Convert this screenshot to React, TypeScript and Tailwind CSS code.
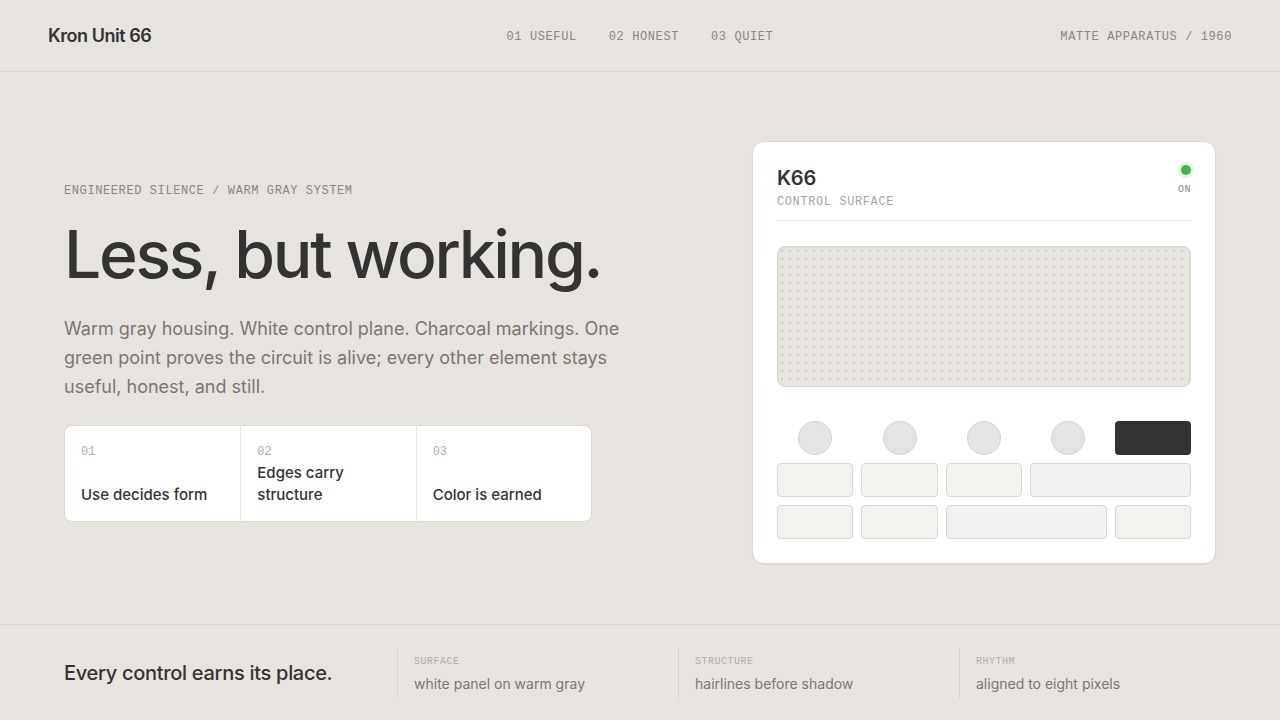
const mono = 'font-["Liberation_Mono","DejaVu_Sans_Mono",monospace]'
const sans = 'font-["Inter","Noto_Sans",sans-serif]'

const principles = [
  { n: '01', t: 'Use decides form' },
  { n: '02', t: 'Edges carry structure' },
  { n: '03', t: 'Color is earned' },
]

const notes = [
  { k: 'SURFACE', v: 'white panel on warm gray' },
  { k: 'STRUCTURE', v: 'hairlines before shadow' },
  { k: 'RHYTHM', v: 'aligned to eight pixels' },
]

function Knob() {
  return (
    <div className="flex items-center justify-center">
      <div className="w-[34px] h-[34px] rounded-full bg-[#e4e4e4] border border-[#d6d3ce]" />
    </div>
  )
}

function Key({ wide = false }: { wide?: boolean }) {
  return (
    <div
      className={
        wide
          ? 'col-span-2 h-[34px] rounded-[4px] border border-[#dad7d2] bg-[#f1f1f1]'
          : 'h-[34px] rounded-[4px] border border-[#dad7d2] bg-[#f3f2ee]'
      }
    />
  )
}

function ControlPanel() {
  return (
    <div className="w-[464px] shrink-0 rounded-[12px] bg-white border border-[#dcd9d4] shadow-[0_1px_2px_rgba(0,0,0,0.04)] p-6">
      <div className="flex items-start justify-between border-b border-[#e6e4e0] pb-[10px]">
        <div>
          <div className={`${sans} text-[20px] font-semibold leading-6 text-[#333] tracking-[-0.01em]`}>K66</div>
          <div className={`${mono} text-[12px] leading-4 tracking-[0.05em] text-[#aaa6a0] mt-1`}>CONTROL SURFACE</div>
        </div>
        <div className="flex flex-col items-end -mt-px">
          <div className="w-[10px] h-[10px] rounded-full bg-[#4caf50] shadow-[0_0_0_3px_#e3f3e3]" />
          <div className={`${mono} text-[10px] tracking-[0.05em] text-[#8a8680] mt-[9px] leading-[12px]`}>ON</div>
        </div>
      </div>

      <div className="mt-[25px] h-[141px] rounded-[8px] border border-[#d8d4ce] bg-[#e7e4df] bg-[radial-gradient(#cdc8c1_1px,transparent_1px)] bg-[length:8px_8px] shadow-[inset_0_1px_2px_rgba(0,0,0,0.05)]" />

      <div className="mt-[34px] grid grid-cols-5 gap-2">
        <Knob />
        <Knob />
        <Knob />
        <Knob />
        <div className="h-[34px] rounded-[4px] bg-[#333333]" />
        <Key />
        <Key />
        <Key />
        <Key wide />
        <Key />
        <Key />
        <Key wide />
        <Key />
      </div>
    </div>
  )
}

export default function App() {
  return (
    <div className={`${sans} min-h-[720px] bg-[#e7e4df] text-[#333] flex flex-col`}>
      <header className="h-[72px] border-b border-[#d6d3ce] px-12 grid grid-cols-3 items-center">
        <div className="text-[18px] font-semibold tracking-[-0.025em] text-[#333]">Kron Unit 66</div>
        <nav className={`${mono} flex justify-center gap-8 pt-[2px] text-[12px] tracking-[0.05em] text-[#8a8680]`}>
          <span>01 USEFUL</span>
          <span>02 HONEST</span>
          <span>03 QUIET</span>
        </nav>
        <div className={`${mono} text-right pt-[2px] text-[12px] tracking-[0.05em] text-[#8a8680]`}>MATTE APPARATUS / 1960</div>
      </header>

      <main className="flex-1 px-16 flex items-center justify-between pt-[8px]">
        <section className="w-[580px]">
          <div className={`${mono} text-[12px] tracking-[0.05em] text-[#8a8680]`}>ENGINEERED SILENCE / WARM GRAY SYSTEM</div>
          <h1 className="mt-[14px] text-[66px] leading-[80px] font-medium tracking-[-0.035em] text-[#333]">
            Less, but working.
          </h1>
          <p className="mt-[20px] text-[18px] leading-[29px] text-[#7a766f] w-[570px]">
            Warm gray housing. White control plane. Charcoal markings. One green point proves the circuit is alive; every other element stays useful, honest, and still.
          </p>
          <div className="mt-[24px] w-[528px] h-[97px] grid grid-cols-3 rounded-[8px] border border-[#dcd9d4] bg-white overflow-hidden">
            {principles.map((p, i) => (
              <div
                key={p.n}
                className={`flex flex-col justify-between px-4 pt-[18px] pb-[15px] ${i > 0 ? 'border-l border-[#e6e4e0]' : ''}`}
              >
                <div className={`${mono} text-[12px] text-[#b1ada7] leading-4`}>{p.n}</div>
                <div className="text-[15px] font-medium leading-[22px] text-[#333] pr-4">{p.t}</div>
              </div>
            ))}
          </div>
        </section>

        <ControlPanel />
      </main>

      <footer className="h-[96px] border-t border-[#d6d3ce] pl-16 pr-10 flex items-center">
        <div className="w-[333px] shrink-0 text-[20px] font-medium tracking-[-0.015em] text-[#333]">Every control earns its place.</div>
        {notes.map((n) => (
          <div key={n.k} className="w-[281px] shrink-0 border-l border-[#d6d3ce] pl-4 pt-[6px] pb-[4px]">
            <div className={`${mono} text-[10px] tracking-[0.05em] text-[#b1ada7] leading-4`}>{n.k}</div>
            <div className="mt-[4px] text-[14px] leading-5 text-[#7a766f]">{n.v}</div>
          </div>
        ))}
      </footer>
    </div>
  )
}
